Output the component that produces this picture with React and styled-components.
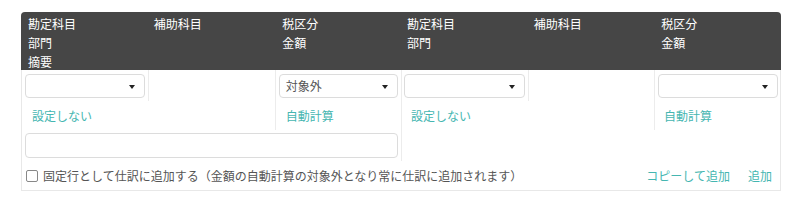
import React from "react";
import styled, { createGlobalStyle } from "styled-components";

const Global = createGlobalStyle`
  html, body { margin: 0; padding: 0; background: #fff; }
  body {
    font-family: "Noto Sans CJK JP", "Noto Sans", sans-serif;
    font-size: 12px;
    color: #555;
  }
  * { box-sizing: border-box; }
`;

const Page = styled.div`
  padding: 12px 0 0 21px;
`;

const Table = styled.div`
  width: 760px;
  border: 1px solid #e8e8e8;
  border-top: none;
  border-radius: 4px 4px 0 0;
`;

const Header = styled.div`
  display: grid;
  grid-template-columns: repeat(6, 1fr);
  grid-template-rows: 20px 19px 18px;
  padding-top: 1px;
  background: #464646;
  border-radius: 4px 4px 0 0;
  margin: 0 -1px;
`;

const HeadCell = styled.div`
  color: #fff;
  display: flex;
  align-items: center;
  padding-left: ${(p) => p.$pad || 7}px;
  white-space: nowrap;
`;

const Body = styled.div`
  display: grid;
  grid-template-columns: 1fr 1fr;
`;

const Half = styled.div`
  display: grid;
  grid-template-columns: repeat(3, 1fr);
  grid-template-rows: 31px 29px 31px;
  border-left: ${(p) => (p.$divided ? "1px solid #ececec" : "none")};
`;

const Cell = styled.div`
  grid-column: span ${(p) => p.$span || 1};
  border-left: ${(p) => (p.$divided ? "1px solid #ececec" : "none")};
  padding: ${(p) => p.$padding || "0"};
  display: flex;
  align-items: center;
`;

const SelectBox = styled.div`
  position: relative;
  width: 100%;
  height: 24px;
  border: 1px solid #dcdcdc;
  border-radius: 4px;
  background: #fff;
  color: #555;
  padding-left: 6px;
  display: flex;
  align-items: center;
  &::after {
    content: "";
    position: absolute;
    right: 9px;
    top: 10px;
    border-left: 3.5px solid transparent;
    border-right: 3.5px solid transparent;
    border-top: 4px solid #222;
  }
`;

const TextInput = styled.div`
  width: 100%;
  height: 25px;
  border: 1px solid #dcdcdc;
  border-radius: 4px;
  background: #fff;
`;

const LinkText = styled.a`
  color: #45b6b1;
  text-decoration: none;
  cursor: pointer;
  white-space: nowrap;
`;

const Footer = styled.div`
  display: flex;
  align-items: center;
  justify-content: space-between;
  height: 29px;
  padding: 0 8px 0 4px;
`;

const CheckLabel = styled.label`
  display: flex;
  align-items: center;
  gap: 5px;
  color: #555;
  white-space: nowrap;
`;

const CheckBox = styled.span`
  width: 12px;
  height: 12px;
  border: 1px solid #888;
  border-radius: 2px;
  background: #fff;
`;

const Actions = styled.div`
  display: flex;
  gap: 18px;
`;

export default function App() {
  return (
    <>
      <Global />
      <Page>
        <Table>
          <Header>
            <HeadCell>勘定科目</HeadCell>
            <HeadCell $pad={6}>補助科目</HeadCell>
            <HeadCell $pad={8}>税区分</HeadCell>
            <HeadCell $pad={6}>勘定科目</HeadCell>
            <HeadCell $pad={6}>補助科目</HeadCell>
            <HeadCell $pad={7}>税区分</HeadCell>
            <HeadCell>部門</HeadCell>
            <HeadCell />
            <HeadCell $pad={8}>金額</HeadCell>
            <HeadCell $pad={6}>部門</HeadCell>
            <HeadCell />
            <HeadCell $pad={7}>金額</HeadCell>
            <HeadCell>摘要</HeadCell>
          </Header>
          <Body>
            <Half>
              <Cell $padding="3px 3px 3px 3px">
                <SelectBox />
              </Cell>
              <Cell $divided />
              <Cell $divided $padding="3px 3px 3px 3px">
                <SelectBox>対象外</SelectBox>
              </Cell>
              <Cell $span={2} $padding="0 0 0 10px">
                <LinkText>設定しない</LinkText>
              </Cell>
              <Cell $divided $padding="0 0 0 10px">
                <LinkText>自動計算</LinkText>
              </Cell>
              <Cell $span={3} $padding="3px 3px 3px 3px">
                <TextInput />
              </Cell>
            </Half>
            <Half $divided>
              <Cell $padding="3px 3px 3px 2px">
                <SelectBox />
              </Cell>
              <Cell $divided />
              <Cell $divided $padding="3px 2px 3px 3px">
                <SelectBox />
              </Cell>
              <Cell $span={2} $padding="0 0 0 9px">
                <LinkText>設定しない</LinkText>
              </Cell>
              <Cell $divided $padding="0 0 0 9px">
                <LinkText>自動計算</LinkText>
              </Cell>
              <Cell $span={3} />
            </Half>
          </Body>
          <Footer>
            <CheckLabel>
              <CheckBox />
              固定行として仕訳に追加する（金額の自動計算の対象外となり常に仕訳に追加されます）
            </CheckLabel>
            <Actions>
              <LinkText>コピーして追加</LinkText>
              <LinkText>追加</LinkText>
            </Actions>
          </Footer>
        </Table>
      </Page>
    </>
  );
}
